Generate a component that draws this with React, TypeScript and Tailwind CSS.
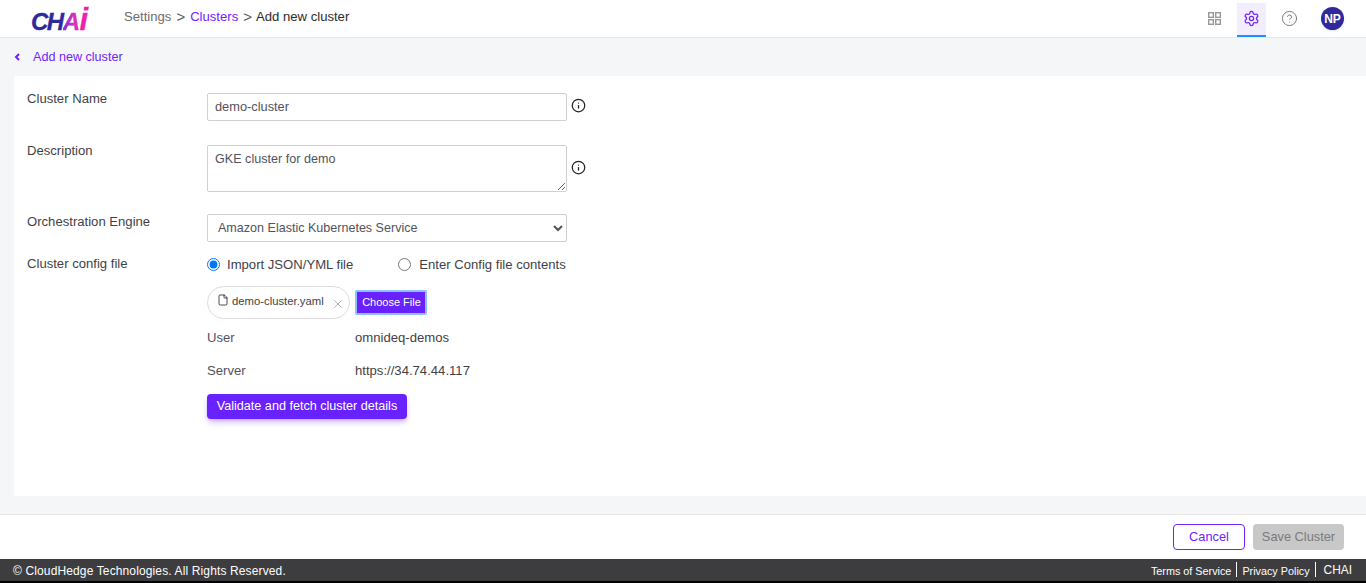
import React from "react";
import { File, Info, Settings, CircleHelp, X } from "lucide-react";

const labelClass = "w-[180px] shrink-0 text-[13.12px] leading-[15px] text-[#3f3f46]";

export default function App() {
    return (
        <div className="h-[583px] w-[1366px] flex flex-col overflow-hidden bg-white font-['Liberation_Sans',Arial,sans-serif]">
            <header className="h-[38px] shrink-0 flex items-center border-b border-[#e8e8ea] bg-white">
                <div className="w-[124px] pl-[31px] h-full flex items-center">
                    <span className="text-[24px] leading-none font-bold italic tracking-[-1.5px] mt-[1px] whitespace-nowrap [-webkit-text-stroke:0.3px]">
                        <span className="text-[#2e2a9e]">CH</span>
                        <span className="bg-linear-to-r from-[#8a25d8] to-[#ff1fb0] bg-clip-text text-transparent pr-[1px]">A</span>
                        <span className="text-[31px] leading-none text-[#f01fb0]">i</span>
                    </span>
                </div>
                <nav className="flex items-center text-[13.12px] mb-[4px]">
                    <span className="text-[#6b6b70]">Settings</span>
                    <span className="mx-[5px] text-[15px] leading-[15px] text-[#55555a]">&gt;</span>
                    <span className="text-[#6f23ff]">Clusters</span>
                    <span className="ml-[5px] mr-[4px] text-[15px] leading-[15px] text-[#55555a]">&gt;</span>
                    <span className="text-[#2b2b2b]">Add new cluster</span>
                </nav>
                <div className="ml-auto flex items-center h-full">
                    <svg width="13" height="13" viewBox="0 0 13 13" fill="none" stroke="#999999" strokeWidth="1.4" className="mr-[16px]">
                        <rect x="0.7" y="0.7" width="4.6" height="4.6" />
                        <rect x="7.7" y="0.7" width="4.6" height="4.6" />
                        <rect x="0.7" y="7.7" width="4.6" height="4.6" />
                        <rect x="7.7" y="7.7" width="4.6" height="4.6" />
                    </svg>
                    <div className="w-[29px] h-[34px] mt-[2px] flex items-center justify-center bg-[#f3eeff] border-b-2 border-[#1e90ff] mr-[15px]">
                        <Settings size={17} strokeWidth={1.8} className="text-[#6f23ff]" />
                    </div>
                    <CircleHelp size={17} strokeWidth={1.3} className="text-[#6e6e6e] mr-[23px]" />
                    <div className="w-[23px] h-[23px] mr-[22px] rounded-full bg-[#2e2a9e] text-white text-[12px] font-bold flex items-center justify-center shadow-sm">NP</div>
                </div>
            </header>

            <main className="flex-1 flex flex-col bg-[#f5f6f8]">
                <div className="h-[38px] shrink-0 flex items-center pl-[14px] text-[#6f23ff]">
                    <svg width="6" height="8" viewBox="0 0 6 8" fill="none" stroke="#6f23ff" strokeWidth="2">
                        <path d="M5 1 2 4l3 3" />
                    </svg>
                    <span className="ml-[13px] text-[12.6px]">Add new cluster</span>
                </div>
                <div className="ml-[14px] h-[420px] bg-white pl-[13px] pt-[15px] flex flex-col">
                    <div className="flex h-[30px]">
                        <label className={labelClass}>Cluster Name</label>
                        <input
                            readOnly
                            value="demo-cluster"
                            className="mt-[2px] w-[360px] h-[28px] px-[7px] pb-[2px] rounded-[2px] border border-[#cfcfd4] bg-white text-[12.8px] text-[#52525b] outline-none"
                        />
                        <Info size={15} strokeWidth={2} className="ml-[4px] mt-[7px] text-[#222222]" />
                    </div>
                    <div className="flex mt-[24px] h-[47px]">
                        <label className={labelClass + " -mt-[2px]"}>Description</label>
                        <textarea
                            readOnly
                            value="GKE cluster for demo"
                            className="w-[360px] h-[47px] px-[7px] pt-[6px] pb-[4px] rounded-[2px] border border-[#cfcfd4] bg-white text-[12.6px] leading-[15px] text-[#52525b] outline-none resize"
                        />
                        <Info size={15} strokeWidth={2} className="ml-[4px] mt-[15px] text-[#222222]" />
                    </div>
                    <div className="flex mt-[22px] h-[28px]">
                        <label className={labelClass}>Orchestration Engine</label>
                        <select className="w-[360px] h-[28px] px-[6px] rounded-[2px] border border-[#cfcfd4] bg-white text-[12.56px] text-[#52525b] outline-none">
                            <option>Amazon Elastic Kubernetes Service</option>
                        </select>
                    </div>
                    <div className="flex mt-[15px]">
                        <label className={labelClass + " -mt-[1px]"}>Cluster config file</label>
                        <div className="flex flex-col">
                            <div className="flex items-center h-[15px] text-[13.12px] text-[#3f3f46]">
                                <input type="radio" name="source" defaultChecked className="w-[13px] h-[13px] m-0 accent-[#0075ff]" />
                                <span className="ml-[7px]">Import JSON/YML file</span>
                                <input type="radio" name="source" className="ml-[45px] w-[13px] h-[13px] m-0" />
                                <span className="ml-[8px]">Enter Config file contents</span>
                            </div>
                            <div className="flex items-center mt-[14px]">
                                <div className="relative w-[143px] h-[33px] rounded-full border border-[#dcdcdc] flex items-start pl-[9px] pt-[6px] text-[11.3px] text-[#3f3f46]">
                                    <File size={12} strokeWidth={1.6} className="text-[#222222] mt-[1px]" />
                                    <span className="ml-[3px]">demo-cluster.yaml</span>
                                    <X size={14} strokeWidth={1} className="absolute left-[123px] top-[10px] text-[#777777]" />
                                </div>
                                <button className="ml-[5px] w-[72px] h-[25px] pl-[1px] bg-[#6821ff] text-white text-[11px] rounded-[2px] border-2 border-[#8fc0fa]">Choose File</button>
                            </div>
                            <div className="flex mt-[11px] text-[13.12px] leading-[15px]">
                                <span className="w-[148px] text-[#52525b]">User</span>
                                <span className="text-[#3f3f46]">omnideq-demos</span>
                            </div>
                            <div className="flex mt-[18px] text-[13.12px] leading-[15px]">
                                <span className="w-[148px] text-[#52525b]">Server</span>
                                <span className="text-[#3f3f46]">https://34.74.44.117</span>
                            </div>
                            <button className="mt-[16px] w-[200px] h-[25px] rounded-[4px] bg-[#6821ff] text-white text-[12.6px] shadow-md shadow-[#6821ff]/30">
                                Validate and fetch cluster details
                            </button>
                        </div>
                    </div>
                </div>
                <div className="flex-1" />
            </main>

            <div className="h-[45px] shrink-0 border-t border-[#e4e4e6] bg-white flex items-center justify-end pr-[22px]">
                <button className="w-[72px] h-[26px] rounded-[4px] border border-[#6f23ff] text-[#6f23ff] text-[12.8px] bg-white">Cancel</button>
                <button className="ml-[8px] w-[91px] h-[26px] rounded-[4px] bg-[#c8c8c8] text-[#7a7a7a] text-[12.8px]">Save Cluster</button>
            </div>

            <footer className="h-[24px] shrink-0 bg-[#3d3d3f] border-b-2 border-black flex items-center text-white pl-[13px]">
                <span className="text-[12px] tracking-[0.13px] mt-[1px]">© CloudHedge Technologies. All Rights Reserved.</span>
                <div className="ml-auto flex items-center pr-[14px] text-[10.8px]">
                    <span className="mt-[2px]">Terms of Service</span>
                    <span className="mx-[5px] h-[15px] border-l border-white" />
                    <span className="mt-[2px]">Privacy Policy</span>
                    <span className="mx-[5px] h-[15px] border-l border-white" />
                    <span className="ml-[3px] mt-[1px] text-[11.9px]">CHAI</span>
                </div>
            </footer>
        </div>
    );
}
